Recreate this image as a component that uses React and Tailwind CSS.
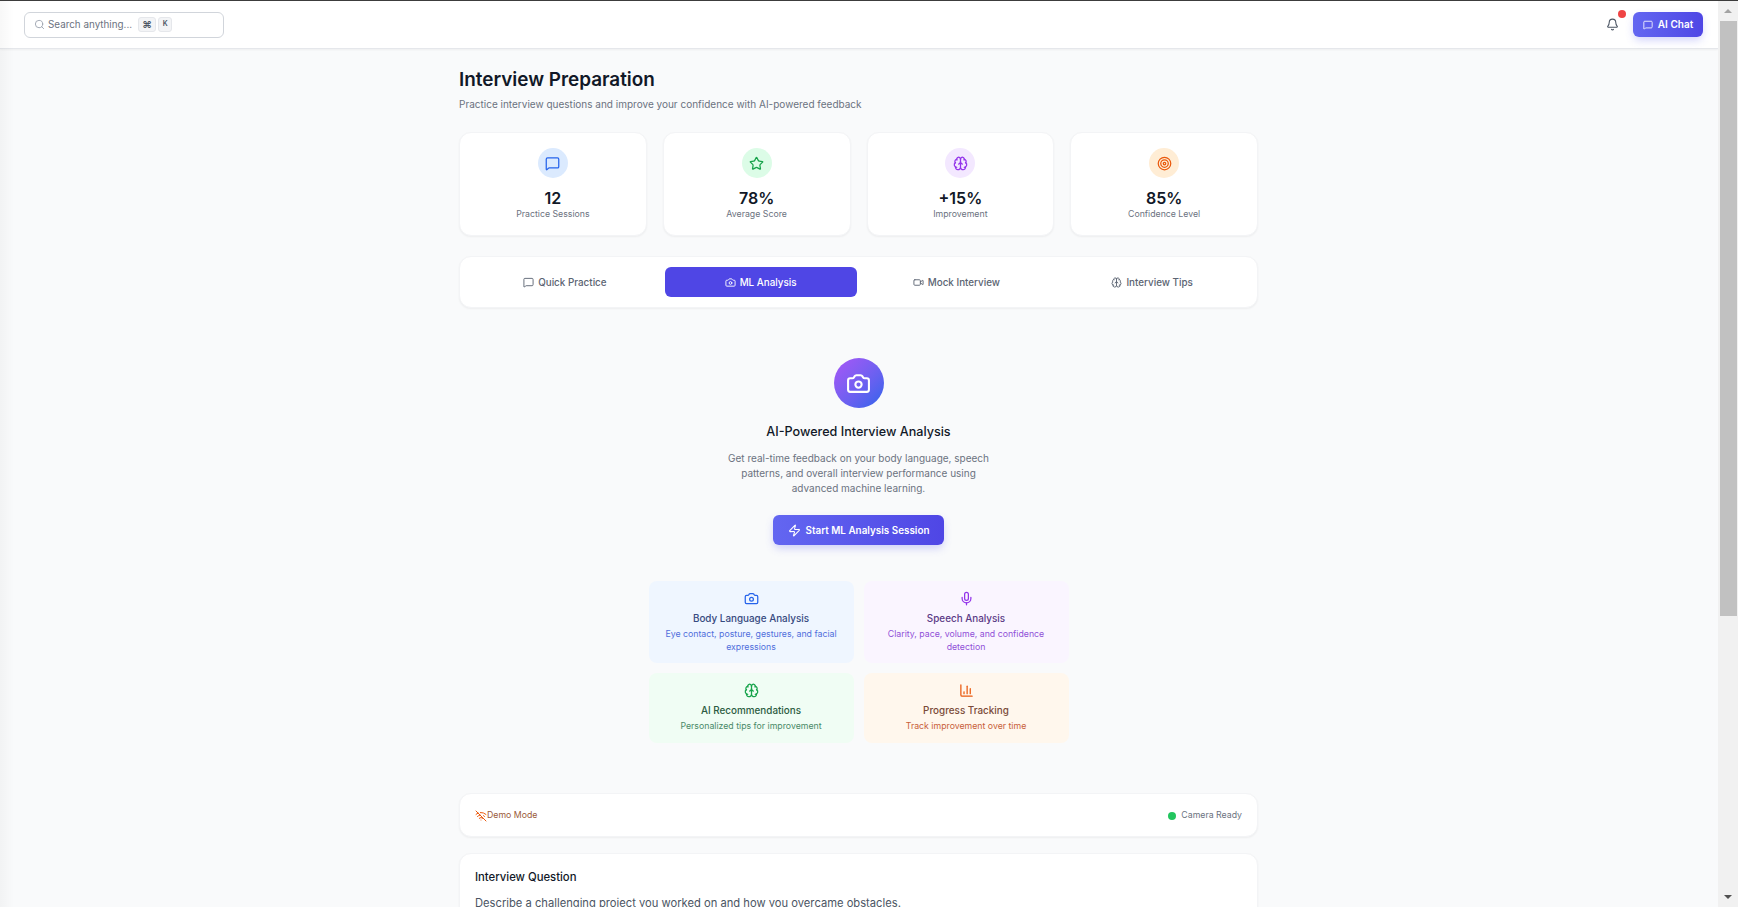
import { Search, Bell, MessageSquare, Star, Brain, Target, Camera, Video, Zap, Mic, ChartColumn, WifiOff } from 'lucide-react'

const cardClass = 'bg-white rounded-xl border border-[#f3f4f6] shadow-[0_1px_2px_rgba(0,0,0,0.05)]'

const stats = [
  { icon: MessageSquare, value: '12', label: 'Practice Sessions', circle: 'bg-[#dbeafe]', color: 'text-[#2563eb]' },
  { icon: Star, value: '78%', label: 'Average Score', circle: 'bg-[#dcfce7]', color: 'text-[#16a34a]' },
  { icon: Brain, value: '+15%', label: 'Improvement', circle: 'bg-[#f3e8ff]', color: 'text-[#9333ea]' },
  { icon: Target, value: '85%', label: 'Confidence Level', circle: 'bg-[#ffedd5]', color: 'text-[#ea580c]' },
]

const tabs = [
  { icon: MessageSquare, label: 'Quick Practice' },
  { icon: Camera, label: 'ML Analysis', active: true },
  { icon: Video, label: 'Mock Interview' },
  { icon: Brain, label: 'Interview Tips' },
]

const features = [
  {
    icon: Camera,
    title: 'Body Language Analysis',
    text: 'Eye contact, posture, gestures, and facial expressions',
    box: 'bg-[#eff6ff]',
    iconColor: 'text-[#2563eb]',
    titleColor: 'text-[#374a80]',
    textColor: 'text-[#4f6fdc]',
  },
  {
    icon: Mic,
    title: 'Speech Analysis',
    text: 'Clarity, pace, volume, and confidence detection',
    box: 'bg-[#faf5ff]',
    iconColor: 'text-[#9333ea]',
    titleColor: 'text-[#5a3a85]',
    textColor: 'text-[#9050d8]',
  },
  {
    icon: Brain,
    title: 'AI Recommendations',
    text: 'Personalized tips for improvement',
    box: 'bg-[#f0fdf4]',
    iconColor: 'text-[#16a34a]',
    titleColor: 'text-[#2c5c42]',
    textColor: 'text-[#4a8a68]',
  },
  {
    icon: ChartColumn,
    title: 'Progress Tracking',
    text: 'Track improvement over time',
    box: 'bg-[#fff7ed]',
    iconColor: 'text-[#ea580c]',
    titleColor: 'text-[#7a4a38]',
    textColor: 'text-[#c8603a]',
  },
]

const Header = () => (
  <header className="h-[48px] shrink-0 bg-white border-b border-[#e5e7eb] shadow-[0_1px_2px_rgba(0,0,0,0.05)] flex items-center justify-between pl-[24px] pr-[15px]">
    <div className="w-[200px] h-[26px] border border-[#d1d5db] rounded-md flex items-center pl-[9px] gap-[3px]">
      <Search className="w-[11px] h-[11px] text-[#9ca3af]" />
      <span className="text-[9.85px] text-[#6b7280]">Search anything...</span>
      <span className="ml-[3px] h-[15px] w-[18px] bg-[#f3f4f6] border border-[#e5e7eb] rounded-[3px] flex items-center justify-center text-[10px] font-bold text-[#4b5563]">⌘</span>
      <span className="ml-[-1px] h-[15px] w-[14px] bg-[#f3f4f6] border border-[#e5e7eb] rounded-[3px] flex items-center justify-center text-[7px] font-semibold text-[#4b5563]">K</span>
    </div>
    <div className="flex items-center gap-[14px]">
      <div className="relative">
        <Bell className="w-[13px] h-[13px] text-[#4b5563]" />
        <span className="absolute -top-[8px] right-[-7px] w-[8px] h-[8px] rounded-full bg-[#ef4444]" />
      </div>
      <button className="h-[25px] w-[70px] rounded-md bg-gradient-to-r from-[#6366f1] to-[#4f46e5] shadow-[0_4px_8px_-1px_rgba(99,102,241,0.3)] text-white text-[10px] font-semibold flex items-center justify-center gap-[5px]">
        <MessageSquare className="w-[10px] h-[10px]" />
        AI Chat
      </button>
    </div>
  </header>
)

const StatCard = ({ icon: Icon, value, label, circle, color }) => (
  <div className={`${cardClass} h-[104px] pt-[15px] flex flex-col items-center`}>
    <div className={`w-[30px] h-[30px] rounded-full flex items-center justify-center ${circle}`}>
      <Icon className={`w-[15px] h-[15px] ${color}`} />
    </div>
    <div className="mt-[10px] text-[16px] leading-[20px] font-semibold text-[#111827]">{value}</div>
    <div className="text-[8.75px] leading-[12px] text-[#6b7280]">{label}</div>
  </div>
)

const App = () => {
  return (
    <div className="relative h-screen overflow-hidden flex flex-col bg-[#f9fafb] text-[#111827] font-['Inter',sans-serif] border-t border-[#3c3c3c]">
      <div className="absolute inset-y-0 left-0 w-[14px] bg-gradient-to-r from-black/[0.03] to-transparent pointer-events-none" />
      <div className="flex flex-1 min-h-0">
        <div className="flex-1 min-w-0 flex flex-col">
          <Header />
          <main className="w-[800px] mx-auto pt-[19px] pr-[1px]">
            <h1 className="text-[18.9px] leading-[24px] font-semibold text-[#111827]">Interview Preparation</h1>
            <p className="mt-[4px] text-[10px] leading-[16px] text-[#6b7280]">
              Practice interview questions and improve your confidence with AI-powered feedback
            </p>

            <div className="mt-[20px] grid grid-cols-4 gap-4">
              {stats.map((s) => (
                <StatCard key={s.label} {...s} />
              ))}
            </div>

            <div className={`${cardClass} mt-[20px] h-[52px] px-[9px] flex items-center gap-1`}>
              {tabs.map(({ icon: Icon, label, active }) => (
                <button
                  key={label}
                  className={`flex-1 h-[30px] rounded-md flex items-center justify-center gap-[4px] text-[9.85px] font-medium ${active ? 'bg-[#4f46e5] text-white' : 'text-[#5b6472]'}`}
                >
                  <Icon className="w-[11px] h-[11px]" />
                  {label}
                </button>
              ))}
            </div>

            <section className="mt-[50px] flex flex-col items-center">
              <div className="w-[50px] h-[50px] rounded-full bg-gradient-to-br from-[#a855f7] to-[#2563eb] flex items-center justify-center">
                <Camera className="w-[25px] h-[25px] text-white" />
              </div>
              <h2 className="mt-[14px] text-[12.6px] leading-[20px] font-medium text-[#111827]">AI-Powered Interview Analysis</h2>
              <p className="mt-[9px] w-[270px] text-center text-[10px] leading-[15px] text-[#6b7280]">
                Get real-time feedback on your body language, speech patterns, and overall interview performance using advanced machine learning.
              </p>
              <button className="mt-[19px] h-[30px] w-[171px] rounded-md bg-gradient-to-r from-[#6366f1] to-[#4f46e5] shadow-[0_4px_8px_-1px_rgba(99,102,241,0.3)] text-white text-[9.9px] font-semibold flex items-center justify-center gap-[5px]">
                <Zap className="w-[13px] h-[13px]" />
                Start ML Analysis Session
              </button>

              <div className="mt-[36px] w-[420px] grid grid-cols-2 gap-[10px]">
                {features.map(({ icon: Icon, title, text, box, iconColor, titleColor, textColor }) => (
                  <div key={title} className={`rounded-lg min-h-[70px] px-[10px] pt-[10px] pb-[9px] flex flex-col items-center text-center ${box}`}>
                    <Icon className={`w-[15px] h-[15px] ${iconColor}`} />
                    <div className={`mt-[4px] text-[9.9px] leading-[16px] font-medium ${titleColor}`}>{title}</div>
                    <div className={`mt-[2px] text-[8.75px] leading-[13px] ${textColor}`}>{text}</div>
                  </div>
                ))}
              </div>
            </section>

            <div className={`${cardClass} mt-[50px] h-[44px] px-[15px] pt-[1px] flex items-center justify-between`}>
              <div className="flex items-center text-[8.75px] text-[#9a5a3a]">
                <WifiOff className="w-[12px] h-[12px] text-[#ea580c]" />
                Demo Mode
              </div>
              <div className="flex items-center gap-[5px] text-[8.75px] text-[#6b7280]">
                <span className="w-[8px] h-[8px] rounded-full bg-[#22c55e]" />
                Camera Ready
              </div>
            </div>

            <div className={`${cardClass} mt-[16px] px-[15px] pt-[14px] pb-[15px]`}>
              <h3 className="text-[11.3px] leading-[18px] font-medium text-[#111827]">Interview Question</h3>
              <p className="mt-[8px] text-[11.2px] leading-[18px] text-[#4b5563]">
                Describe a challenging project you worked on and how you overcame obstacles.
              </p>
            </div>
          </main>
        </div>

        <div className="w-[20px] shrink-0 bg-[#f1f1f1] flex flex-col items-center">
          <svg className="w-[10px] h-[20px] shrink-0" viewBox="0 0 10 20"><polygon points="5,8 9,12 1,12" fill="#a3a3a3" /></svg>
          <div className="w-[17px] h-[595px] bg-[#c1c1c1]" />
          <div className="flex-1" />
          <svg className="w-[10px] h-[20px] shrink-0" viewBox="0 0 10 20"><polygon points="1,8 9,8 5,12" fill="#505050" /></svg>
        </div>
      </div>
    </div>
  )
}

export default App
